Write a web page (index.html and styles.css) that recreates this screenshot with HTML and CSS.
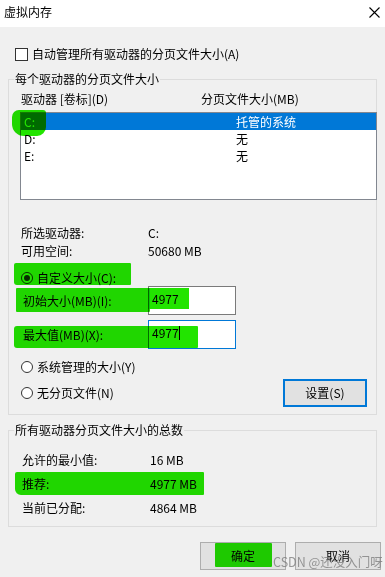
FILE: index.html
```html
<!DOCTYPE html>
<html lang="zh-CN">
<head>
<meta charset="utf-8">
<title>虚拟内存</title>
<link rel="stylesheet" href="styles.css">
</head>
<body>
<div class="dialog">
  <div class="titlebar">
    <span class="title">虚拟内存</span>
    <svg class="close" width="11" height="11" viewBox="0 0 11 11"><path d="M0.5 0.5 L10.5 10.5 M10.5 0.5 L0.5 10.5" stroke="#000" stroke-width="1.1" fill="none"/></svg>
  </div>
  <div class="content">
    <div class="check-row"><span class="checkbox"></span><span>自动管理所有驱动器的分页文件大小(A)</span></div>

    <fieldset class="group g1">
      <legend>每个驱动器的分页文件大小</legend>
      <div class="list-head"><span class="hc1">驱动器 [卷标](D)</span><span>分页文件大小(MB)</span></div>
      <div class="listbox">
        <div class="li sel"><span class="lc1">C:</span><span>托管的系统</span></div>
        <div class="li"><span class="lc1">D:</span><span>无</span></div>
        <div class="li"><span class="lc1">E:</span><span>无</span></div>
      </div>
      <div class="info">
        <div class="kv"><span class="k">所选驱动器:</span><span>C:</span></div>
        <div class="kv"><span class="k">可用空间:</span><span>50680 MB</span></div>
      </div>
      <div class="radio-row first"><span class="radio on"></span><span>自定义大小(C):</span></div>
      <div class="field-row r1"><span class="flabel">初始大小(MB)(I):</span><div class="edit">4977</div></div>
      <div class="field-row r2"><span class="flabel">最大值(MB)(X):</span><div class="edit focus">4977<span class="caret"></span></div></div>
      <div class="radio-row second"><span class="radio"></span><span>系统管理的大小(Y)</span></div>
      <div class="radio-row third"><span class="radio"></span><span class="grow">无分页文件(N)</span><button class="btn default">设置(S)</button></div>
    </fieldset>

    <fieldset class="group g2">
      <legend>所有驱动器分页文件大小的总数</legend>
      <div class="totals">
        <div class="trow"><span class="tk">允许的最小值:</span><span>16 MB</span></div>
        <div class="trow"><span class="tk">推荐:</span><span>4977 MB</span></div>
        <div class="trow"><span class="tk">当前已分配:</span><span>4864 MB</span></div>
      </div>
    </fieldset>

    <div class="buttons">
      <button class="btn">确定</button>
      <button class="btn">取消</button>
    </div>
  </div>

  <div class="mark m-c"></div>
  <div class="mark m-custom"></div>
  <div class="mark m-init"></div>
  <div class="mark m-initval"></div>
  <div class="mark m-max"></div>
  <div class="mark m-rec"></div>
  <div class="mark m-ok"></div>
  <div class="watermark">CSDN @还没入门呀</div>
</div>
</body>
</html>
```

FILE: styles.css
```css
* { box-sizing: border-box; }
html, body { margin: 0; padding: 0; }
body {
  width: 385px;
  height: 577px;
  overflow: hidden;
  background: #f0f0f0;
  font-family: "Microsoft YaHei UI", "Noto Sans CJK SC", "Noto Sans", sans-serif;
  font-size: 12px;
  color: #000;
}
.dialog { position: relative; width: 385px; height: 577px; }

.titlebar {
  height: 27px;
  background: #fff;
  display: flex;
  align-items: center;
  justify-content: space-between;
  padding: 0 5px 3px 4px;
}
.title { line-height: 14px; }
.close { display: block; }

.content { padding: 0 8px; }

.check-row {
  margin-top: 20px;
  height: 14px;
  display: flex;
  align-items: center;
  line-height: 14px;
}
.checkbox {
  width: 13px; height: 13px;
  border: 1px solid #333;
  background: #fff;
  margin-left: 7px;
  margin-right: 4px;
}

.group {
  margin: 0;
  padding: 0;
  border: 1px solid #dcdcdc;
  min-inline-size: 0;
}
.group legend {
  margin-left: 5px;
  padding: 0 1px;
  line-height: 16px;
}
.g1 { margin-top: 10px; padding-bottom: 7px; }
.g2 { margin-top: 7px; padding-bottom: 6px; }

.list-head {
  margin-top: 5px;
  height: 14px;
  line-height: 14px;
  display: flex;
  padding-left: 12px;
}
.hc1 { width: 180px; }

.listbox {
  margin: 6px -1px 0 11px;
  height: 88px;
  border: 1px solid #828790;
  background: #fff;
}
.li {
  height: 17px;
  line-height: 17px;
  display: flex;
  padding-left: 3px;
}
.li.sel { background: #0078d7; color: #fff; }
.lc1 { width: 212px; }

.info { margin-top: 24px; }
.kv {
  height: 18px;
  line-height: 18px;
  display: flex;
  padding-left: 12px;
}
.k { width: 127px; }

.radio-row {
  display: flex;
  align-items: center;
  line-height: 14px;
  padding-left: 12px;
}
.radio-row.first { margin-top: 11px; height: 14px; }
.radio-row.second { margin-top: 11px; height: 14px; }
.radio-row.third { margin-top: 5px; height: 28px; padding-right: 9px; }
.radio {
  width: 12px; height: 12px;
  border: 1px solid #333;
  border-radius: 50%;
  background: #fff;
  margin-right: 4px;
  display: flex;
  align-items: center;
  justify-content: center;
  flex: none;
}
.radio.on::after {
  content: "";
  width: 6px; height: 6px;
  border-radius: 50%;
  background: #333;
}
.grow { flex: 1; }

.field-row {
  display: flex;
  align-items: center;
  height: 29px;
  padding-left: 14px;
}
.field-row.r1 { margin-top: 1px; }
.field-row.r2 { margin-top: 5px; }
.flabel { width: 125px; line-height: 14px; }
.edit {
  width: 88px;
  height: 29px;
  border: 1px solid #7a7a7a;
  background: #fff;
  padding-left: 3px;
  padding-top: 5px;
  line-height: 14px;
  display: flex;
  align-items: flex-start;
}
.edit.focus { border-color: #0078d7; }
.caret {
  display: inline-block;
  width: 1px;
  height: 14px;
  background: #000;
  margin-left: 0;
}

.btn {
  font: inherit;
  color: #000;
  background: #e1e1e1;
  border: 1px solid #adadad;
  width: 86px;
  height: 28px;
  padding: 0;
  line-height: 14px;
}
.btn.default {
  width: 84px;
  border: 2px solid #0078d7;
}

.totals { margin-top: 10px; }
.trow {
  height: 24px;
  line-height: 24px;
  display: flex;
  padding-left: 13px;
}
.tk { width: 128px; }

.buttons {
  margin-top: 15px;
  margin-right: -4px;
  display: flex;
  justify-content: flex-end;
  gap: 9px;
}

.mark {
  position: absolute;
  background: #22e400;
  mix-blend-mode: multiply;
}
.m-c { left: 12px; top: 110px; width: 34px; height: 26px; border-radius: 7px 3px 9px 12px; }
.m-custom { left: 14px; top: 263px; width: 117px; height: 22px; border-radius: 2px 1px 1px 3px; }
.m-init { left: 16px; top: 288px; width: 134px; height: 24px; border-radius: 1px; }
.m-initval { left: 148px; top: 288px; width: 41px; height: 21px; }
.m-max { left: 14px; top: 326px; width: 184px; height: 22px; border-radius: 3px 1px 1px 3px; }
.m-rec { left: 15px; top: 472px; width: 189px; height: 23px; border-radius: 2px 1px 1px 6px; }
.m-ok { left: 215px; top: 543px; width: 57px; height: 24px; border-radius: 1px; }

.watermark {
  position: absolute;
  left: 273px;
  top: 553px;
  line-height: 17px;
  font-size: 12.5px;
  color: rgba(120, 120, 120, 0.75);
  white-space: nowrap;
}
```
